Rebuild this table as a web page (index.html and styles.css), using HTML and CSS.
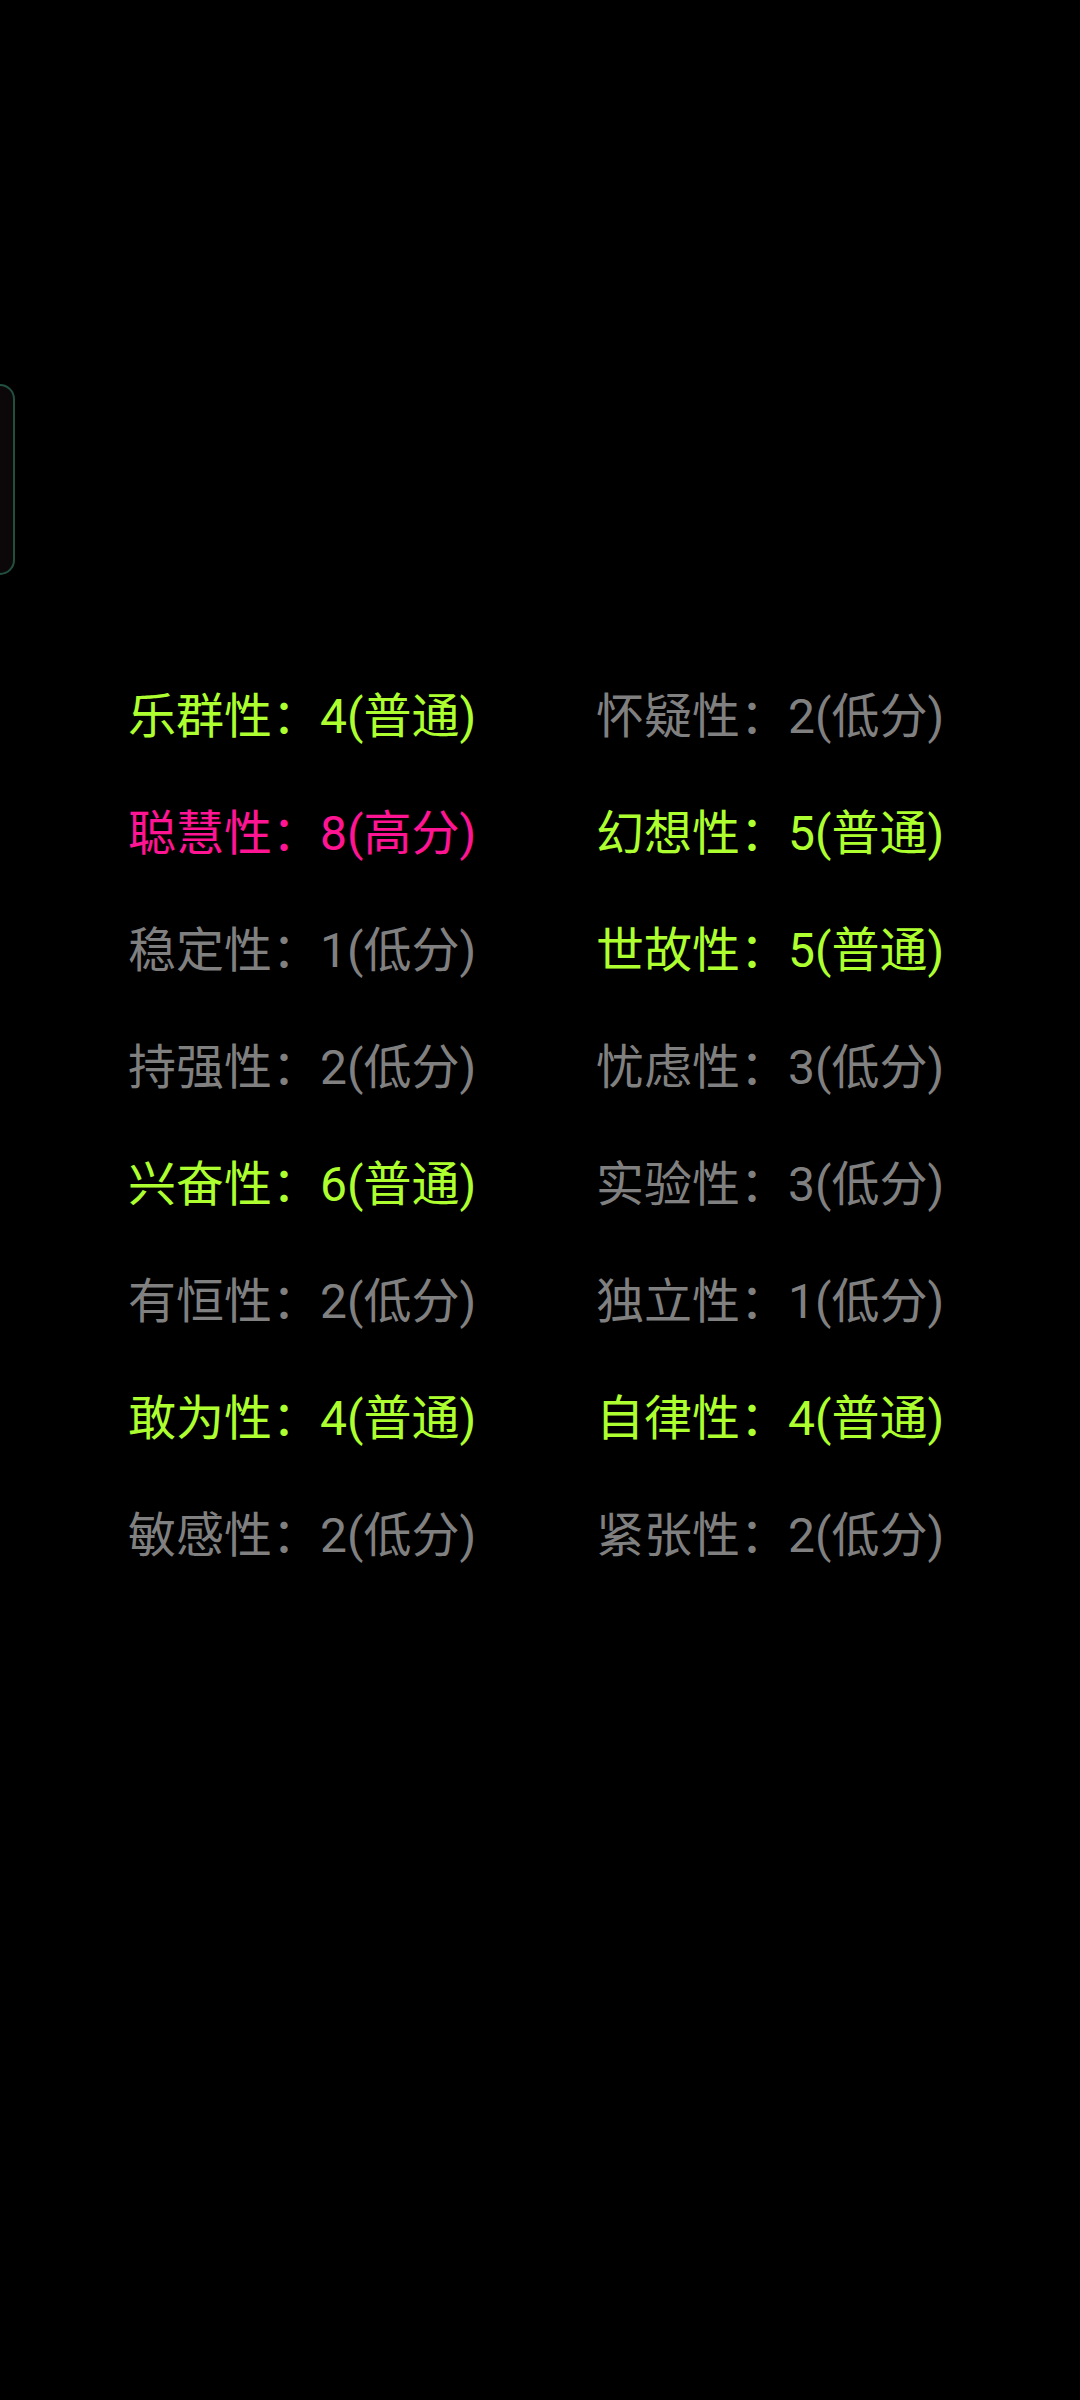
FILE: index.html
```html
<!DOCTYPE html>
<html lang="zh-CN">
<head>
<meta charset="utf-8">
<link rel="stylesheet" href="styles.css">
</head>
<body>
<div class="side-tab"></div>
<main class="traits">
  <div class="trait mid">乐群性：4(普通)</div>
  <div class="trait low">怀疑性：2(低分)</div>
  <div class="trait high">聪慧性：8(高分)</div>
  <div class="trait mid">幻想性：5(普通)</div>
  <div class="trait low">稳定性：1(低分)</div>
  <div class="trait mid">世故性：5(普通)</div>
  <div class="trait low">持强性：2(低分)</div>
  <div class="trait low">忧虑性：3(低分)</div>
  <div class="trait mid">兴奋性：6(普通)</div>
  <div class="trait low">实验性：3(低分)</div>
  <div class="trait low">有恒性：2(低分)</div>
  <div class="trait low">独立性：1(低分)</div>
  <div class="trait mid">敢为性：4(普通)</div>
  <div class="trait mid">自律性：4(普通)</div>
  <div class="trait low">敏感性：2(低分)</div>
  <div class="trait low">紧张性：2(低分)</div>
</main>
</body>
</html>
```
FILE: styles.css
```css
html, body {
  margin: 0;
  padding: 0;
  background: #000;
  width: 1080px;
  height: 2400px;
  overflow: hidden;
}
body {
  position: relative;
  font-family: Roboto, "Noto Sans CJK SC", sans-serif;
}
.side-tab {
  position: absolute;
  left: -20px;
  top: 384px;
  width: 31px;
  height: 187px;
  border: 2px solid #22503f;
  border-radius: 15px;
  background: #0c080a;
}
.traits {
  display: grid;
  grid-template-columns: 468px auto;
  padding: 658px 0 0 128px;
}
.trait {
  font-size: 48px;
  line-height: 117px;
  height: 117px;
  white-space: nowrap;
}
.mid { color: #adff2f; }
.low { color: #808080; }
.high { color: #ff1493; }
```
